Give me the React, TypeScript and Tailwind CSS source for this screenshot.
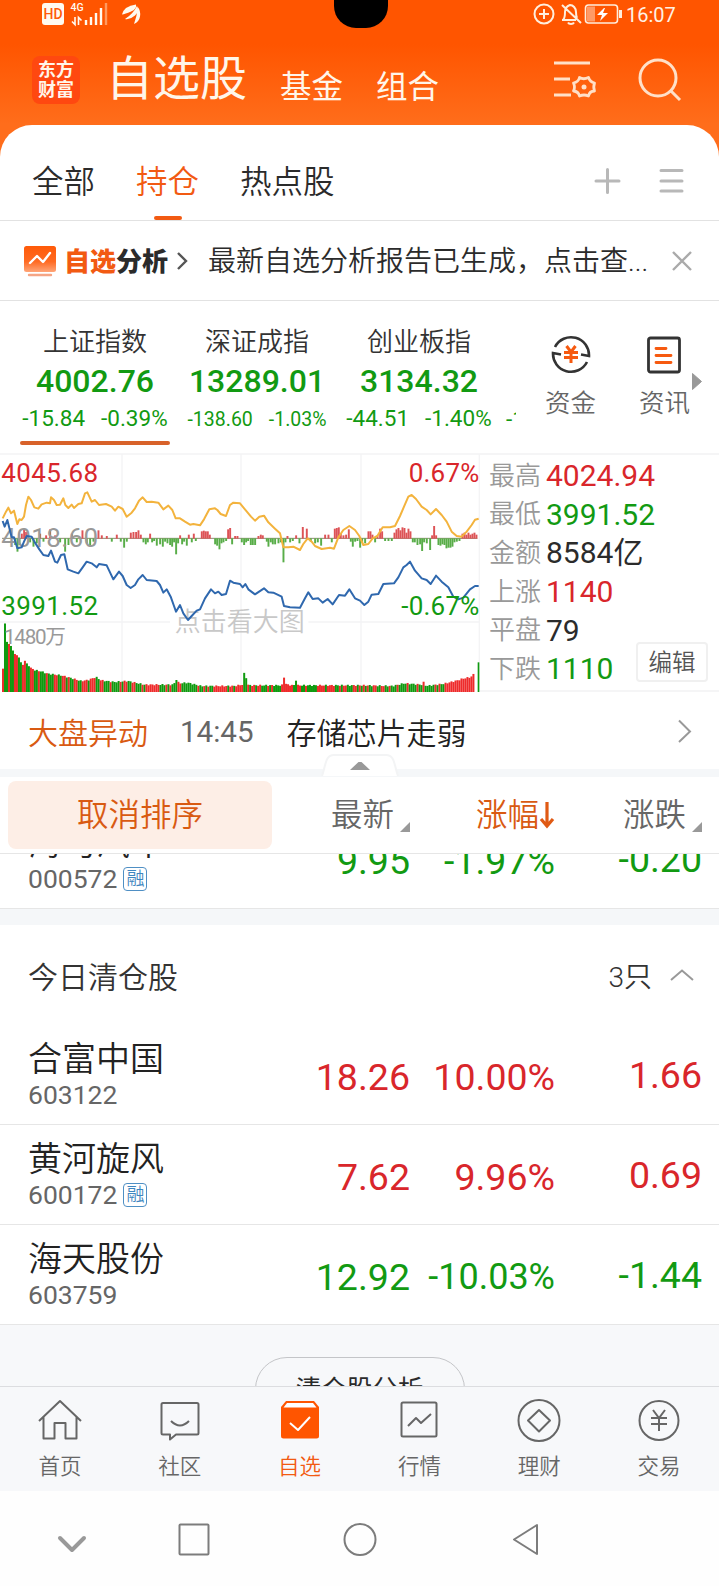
import type { ReactNode } from 'react';

const RED = '#d9262b';
const GREEN = '#129a12';

interface IndexQuote {
  name: string;
  value: string;
  change: string;
  percent: string;
  small?: boolean;
  active?: boolean;
}

interface Stock {
  name: string;
  code: string;
  margin?: boolean;
  price: string;
  percent: string;
  change: string;
  up: boolean;
}

const indices: IndexQuote[] = [
  { name: '上证指数', value: '4002.76', change: '-15.84', percent: '-0.39%', active: true },
  { name: '深证成指', value: '13289.01', change: '-138.60', percent: '-1.03%', small: true },
  { name: '创业板指', value: '3134.32', change: '-44.51', percent: '-1.40%' },
];

const stats = [
  { label: '最高', value: '4024.94', color: 'text-[#d9262b]' },
  { label: '最低', value: '3991.52', color: 'text-[#129a12]' },
  { label: '金额', value: '8584亿', color: 'text-[#2b2b2b]' },
  { label: '上涨', value: '1140', color: 'text-[#d9262b]' },
  { label: '平盘', value: '79', color: 'text-[#2b2b2b]' },
  { label: '下跌', value: '1110', color: 'text-[#129a12]' },
];

const cleared: Stock[] = [
  { name: '合富中国', code: '603122', price: '18.26', percent: '10.00%', change: '1.66', up: true },
  { name: '黄河旋风', code: '600172', margin: true, price: '7.62', percent: '9.96%', change: '0.69', up: true },
  { name: '海天股份', code: '603759', price: '12.92', percent: '-10.03%', change: '-1.44', up: false },
];

// Chart data, in the units of the chart's viewBox
const leadLine =
  '8,205 18,185 25,173 33,190 42,182 52,222 58,208 65,210 72,200 78,165 85,140 93,150 103,172 115,176 125,163 140,158 150,160 153,142 162,150 170,165 180,164 190,145 196,165 205,174 215,164 222,174 235,162 245,160 255,130 262,127 275,155 285,150 297,165 318,162 335,170 345,182 355,170 368,177 380,200 395,188 405,175 417,152 428,142 440,156 455,155 475,158 490,178 505,167 517,180 527,205 540,205 555,215 570,224 580,222 600,226 612,208 628,178 645,175 652,180 662,192 678,198 690,165 700,158 720,160 738,182 753,200 765,212 778,200 792,197 805,217 825,236 840,250 850,292 865,292 880,290 900,300 910,282 923,265 935,275 945,288 965,297 990,293 1002,296 1015,262 1030,240 1048,228 1065,240 1078,258 1090,285 1105,282 1118,265 1132,258 1148,232 1170,232 1185,228 1200,198 1212,170 1225,140 1235,135 1248,147 1265,170 1280,180 1292,193 1308,177 1325,195 1340,215 1355,245 1370,258 1385,260 1400,245 1415,225 1425,209 1436,206';

const priceLine =
  '8,213 14,230 22,210 35,262 42,262 52,295 65,292 72,275 80,258 95,260 105,278 118,298 130,315 145,318 153,302 165,335 172,338 183,315 193,313 203,358 220,365 235,370 248,352 260,335 275,340 290,352 297,342 320,346 340,388 357,365 368,378 380,405 392,414 405,405 415,388 428,375 440,390 470,393 480,405 490,428 500,418 512,440 522,468 528,485 540,465 550,490 564,510 575,498 590,482 600,478 615,445 633,418 645,430 655,425 665,435 678,432 690,392 700,398 720,402 728,412 736,402 745,418 765,433 792,415 805,427 820,428 845,440 852,468 870,472 900,473 915,445 925,427 938,447 955,445 968,458 983,447 998,463 1017,435 1035,437 1048,418 1065,445 1080,452 1093,465 1105,455 1115,434 1135,432 1150,402 1182,400 1195,382 1210,352 1220,345 1230,335 1245,362 1265,385 1280,390 1292,402 1308,377 1325,395 1345,412 1360,440 1375,448 1390,443 1410,418 1425,408 1436,408';

const momentum: [number, number][] = [
  [45, -20], [52, -40], [58, -20], [65, 15], [72, 30], [78, 20], [90, -12], [100, -25], [110, -15], [120, 15],
  [130, -10], [138, 10], [150, 28], [165, 10], [180, -12], [195, -40], [205, -20], [215, 15], [230, -12], [247, 25],
  [260, -15], [270, -20], [280, -10], [295, 25], [305, 10], [320, 8], [335, -10], [350, 12], [362, -10], [372, -28],
  [380, -10], [392, 18], [400, 20], [408, 20], [415, 25], [422, 12], [430, -12], [437, -18], [443, -12], [450, 15],
  [456, -12], [462, -8], [470, -22], [480, -18], [488, -25], [495, -10], [502, -15], [510, -20], [516, -25], [522, -12],
  [528, -48], [534, -15], [540, 10], [546, -18], [552, -10], [560, -22], [566, 12], [575, -12], [581, 15], [587, -8],
  [605, 22], [611, 24], [617, 22], [623, 22], [629, 12], [645, -18], [651, -22], [658, -33], [664, -15], [670, -12],
  [678, -8], [684, 28], [690, 32], [696, -18], [705, 8], [712, 8], [725, -12], [732, -20], [738, -12], [744, -8],
  [752, -20], [758, -20], [765, -20], [775, 8], [782, 12], [788, 10], [800, -10], [805, -25], [812, -12], [818, -18],
  [825, -18], [835, -15], [842, -12], [850, -72], [856, -12], [862, 8], [870, -12], [878, -8], [888, 10], [898, -15],
  [908, 35], [920, 30], [932, -10], [945, -15], [953, -12], [963, -22], [975, 12], [985, 12], [995, -12], [1004, 30],
  [1010, 32], [1016, 34], [1022, 15], [1030, 10], [1038, 12], [1046, 28], [1052, -10], [1058, -25], [1065, -10], [1072, -8],
  [1080, -28], [1086, -12], [1095, -15], [1105, 22], [1111, 22], [1117, 12], [1125, -12], [1132, 10], [1140, 30], [1146, 22],
  [1155, -8], [1165, -8], [1175, -8], [1183, 18], [1189, 28], [1195, 32], [1201, 25], [1207, 34], [1213, 32], [1219, 18],
  [1225, 30], [1231, 22], [1238, -12], [1244, -12], [1252, -20], [1260, -18], [1266, -38], [1272, -12], [1280, -15], [1290, -35],
  [1296, 10], [1302, 38], [1308, 10], [1315, -20], [1321, -22], [1327, -18], [1333, -20], [1339, -30], [1345, -28], [1351, -28],
  [1357, -25], [1363, -12], [1370, -10], [1378, -8], [1387, 15], [1393, 18], [1399, 12], [1405, 18], [1411, 12], [1417, 15],
  [1423, 18], [1429, 12],
];

const volumeShape: [number, number][] = [
  [6, 70], [12, 206], [18, 150], [30, 138], [40, 115], [52, 108], [62, 84], [68, 80], [73, 98], [80, 80], [100, 66],
  [120, 62], [140, 55], [180, 50], [210, 42], [240, 33], [262, 36], [285, 45], [300, 35], [340, 30], [380, 33],
  [430, 22], [518, 22], [526, 38], [534, 26], [560, 28], [600, 18], [700, 18], [724, 22], [730, 58], [736, 42],
  [742, 20], [843, 20], [849, 45], [856, 22], [879, 20], [885, 36], [891, 20], [960, 20], [1080, 20], [1175, 18],
  [1210, 26], [1262, 22], [1267, 30], [1275, 18], [1330, 25], [1370, 35], [1385, 40], [1410, 45], [1422, 58],
];

const volumeColors =
  'rggrggrrggrrggrrggrgggrgg' +
  'grrggrrgrggrrggrrrgrrrggrrgggrggggrgr' +
  'rggrrgggrgrrrrrrrgggrgrgggrrgggggggg' +
  'rggrgrggrrrrrrrgrrgrrrrggrgrrgrrg' +
  'ggrgrggggrrrrrrggrrggrgggggrrrrgrr' +
  'rrggrgrrgggrrgrgrgrggrrggrrggrgg' +
  'grggggrggggrggrgggggrgrggrrrrrrrrrrrrrrr';

function volumeAt(x: number) {
  const next = volumeShape.findIndex(([px]) => px >= x);
  if (next === -1) return 58;
  if (next === 0) return volumeShape[0][1];
  const [x0, y0] = volumeShape[next - 1];
  const [x1, y1] = volumeShape[next];
  return y0 + ((x - x0) / (x1 - x0)) * (y1 - y0);
}

function MarketChart() {
  const bars = Array.from({ length: 237 }, (_, i) => 6 + i * 5.98);

  return (
    <svg className="block h-[239px] w-[480px] shrink-0" viewBox="0 9 1440 717">
      <g stroke="#f4f4f5" strokeWidth="4">
        <path d="M0 12H1440M366 12V726M723 12V726M1083 12V726M1438 12V726" />
        <path d="M0 516H510M925 516H1440" strokeWidth="5" />
      </g>
      <path d="M6 265H1432" stroke="#8c8a70" strokeWidth="3" />
      {momentum.map(([x, h]) => (
        <rect key={x} x={x - 2.5} y={h > 0 ? 266 - h : 265} width="5.8" height={Math.abs(h)} fill={h > 0 ? '#dd5356' : '#58ad48'} />
      ))}
      {bars.map((x, i) => {
        const h = volumeAt(x) + (i > 14 ? Math.sin(i * 2.3) * 2 : 0);
        return <rect key={i} x={x} y={726 - h} width="6" height={h} fill={volumeColors[i % volumeColors.length] === 'r' ? '#ee2b2b' : '#0f9a0f'} />;
      })}
      <rect x="1433" y="637" width="5" height="89" fill="#0f9a0f" />
      <g fontSize="78">
        <text x="4" y="292" fill="#999" textLength="290">4018.60</text>
        <text x="12" y="583" fill="#999" fontSize="62" textLength="186">1480万</text>
        <text x="524" y="543" fill="#c8c8c8" fontWeight="350" textLength="390">点击看大图</text>
      </g>
      <polyline points={leadLine} fill="none" stroke="#f3b33d" strokeWidth="6" strokeLinejoin="round" />
      <polyline points={priceLine} fill="none" stroke="#2f68ae" strokeWidth="6" strokeLinejoin="round" />
      <g fontSize="78">
        <text x="4" y="96" fill={RED} textLength="290">4045.68</text>
        <text x="4" y="494" fill={GREEN} textLength="290">3991.52</text>
        <text x="1438" y="96" fill={RED} textAnchor="end" textLength="212">0.67%</text>
        <text x="1438" y="494" fill={GREEN} textAnchor="end" textLength="234">-0.67%</text>
      </g>
    </svg>
  );
}

function StatusBar() {
  return (
    <div className="flex h-7 items-center pl-[42px] pr-[43px] text-white">
      <svg className="h-7 w-[100px]" viewBox="0 0 100 28" fill="none">
        <rect x="0" y="3" width="22" height="22" rx="3" fill="#fffaf0" />
        <text x="11" y="19" fill="#ff5a0a" fontSize="14" fontWeight="500" textAnchor="middle">HD</text>
        <text x="28.5" y="11" fill="#fffaf0" fontSize="10.5" fontWeight="500">4G</text>
        <path d="M33 17v7.500l-3-3M36.500 25v-7.500l3 3" stroke="#fffaf0" strokeWidth="1.600" />
        <path d="M44 25v-5M49 25v-8M54 25v-12M59 25V8" stroke="#fffaf0" strokeWidth="2.400" />
        <path d="M64 25V3" stroke="#ff9a60" strokeWidth="2.400" />
        <path d="M80 14.500Q82 6 94 4.500Q95 9 89 11.500T80 14.500z" fill="#fffaf0" />
        <path d="M83 19Q91 14 95 6Q98 11 93 15.500T83 19z" fill="#fffaf0" />
        <path d="M92 24Q95 16 95.800 7Q99 11 98 16.500T92 24z" fill="#fffaf0" />
      </svg>
      <svg className="ml-auto h-7 w-[92px]" viewBox="0 0 92 28" fill="none" stroke="#ffeedd" strokeWidth="2">
        <circle cx="12" cy="14" r="9.500" />
        <path d="M7 14h10M12 9v10" />
        <path d="M31 20c2-2 2-4 2-8 0-4 2-6 5-7 3 0 6 3 6 7 0 3 0 4 1 6M30 20h14M36 22.500c1 2 5 2 6 0M30 5l19 18" strokeWidth="2" />
        <rect x="53.500" y="5" width="32" height="18" rx="3" strokeWidth="1.600" />
        <path d="M55 6.500h8v15h-8z" fill="#ff9a66" stroke="none" />
        <path d="M88.500 10v8" strokeWidth="3" />
        <path d="M72 8l-7 7h5l-2 6 8-8h-5l2-5z" fill="#fff" stroke="none" />
      </svg>
      <span className="ml-[2px] w-[50px] pt-0.5 text-[20px] leading-7 text-[#fff1e4]">16:07</span>
    </div>
  );
}

function Header() {
  return (
    <header className="relative h-[160px] shrink-0 bg-[linear-gradient(#ff5500_0px,#ff5500_44px,#ff6d1b_124px)]">
      <div className="absolute left-[334px] top-[-28px] h-14 w-[54px] rounded-[22px] bg-black" />
      <StatusBar />
      <div className="flex h-[96px] items-center pl-8 pr-[37px] text-[#fff6ea]">
        <div className="mt-2 flex h-12 w-12 flex-col items-center justify-center rounded-lg bg-[#ff4810] text-[18px] font-bold leading-[20px]">
          <span>东方</span>
          <span>财富</span>
        </div>
        <h1 className="ml-[26px] mt-1.5 text-[47px] leading-[60px]">自选股</h1>
        <span className="ml-[33px] mt-6 text-[31.500px] leading-10">基金</span>
        <span className="ml-[33px] mt-6 text-[31.500px] leading-10">组合</span>
        <svg className="ml-auto mt-[7px] h-11 w-[44px]" viewBox="0 0 44 44" fill="none" stroke="#ffe0c8" strokeWidth="3">
          <path d="M0 5h36M0 21h16M0 37h17" />
          <path d="M25.500 19.500q4 2.500 9 0 1.500 4.500 6 5.500-1.500 4.500 0 8-5 0-6 5-4.500-2-9 0-1-4.500-6-5 2-3.500 0-8 5-1 6-5.500z" strokeLinejoin="round" strokeWidth="2.800" />
          <circle cx="30" cy="29" r="2.500" fill="#ffe0c8" stroke="none" />
        </svg>
        <svg className="ml-[40px] mt-[7px] h-11 w-11" viewBox="0 0 44 44" fill="none" stroke="#ffe0c8" strokeWidth="3">
          <circle cx="20" cy="20" r="18" />
          <path d="M32 32l10 10" />
        </svg>
      </div>
    </header>
  );
}

function GroupTabs() {
  return (
    <div className="flex h-24 shrink-0 border-b border-[#e2e2e2] pl-8 pr-[35px] text-[31.500px] font-[350] leading-[115px] text-[#2b2b2b]">
      <span>全部</span>
      <span className="flex flex-col items-center pl-[41px] text-[#f25a12]">
        <span className="h-[91px]">持仓</span>
        <i className="h-1 w-7 rounded-full bg-[#f25a12]" />
      </span>
      <span className="pl-[41px]">热点股</span>
      <svg className="ml-auto mt-[42px] h-[28px] w-[92px]" viewBox="0 0 92 28" fill="none" stroke="#b8b8b8" strokeWidth="3" strokeLinecap="round">
        <path d="M4 14h23M15.500 2.500v23M69 3.500h21M69 14h21M69 24h21" />
      </svg>
    </div>
  );
}

function AnalysisBanner() {
  return (
    <div className="flex h-20 shrink-0 items-center border-b border-[#e2e2e2] pl-6 pr-[27px]">
      <svg className="h-8 w-8" viewBox="0 0 32 32" fill="none">
        <defs>
          <linearGradient id="badge" x1="0" y1="0" x2="0" y2="1">
            <stop offset="0" stopColor="#ff5a08" />
            <stop offset=".6" stopColor="#ff6a22" />
            <stop offset="1" stopColor="#ffa578" />
          </linearGradient>
        </defs>
        <rect y="1" width="32" height="26" rx="2.500" fill="url(#badge)" />
        <path d="M6 18l7-7 6 6 7-9" stroke="#fff" strokeWidth="2.400" strokeLinecap="round" strokeLinejoin="round" />
        <path d="M5 30h22" stroke="#f5a585" strokeWidth="2.400" strokeLinecap="round" />
      </svg>
      <span className="ml-[8px] pt-0.5 text-[26px] font-black leading-9 text-[#2b2b2b]">
        <b className="font-black text-[#f25a12]">自选</b>分析
      </span>
      <svg className="ml-[6px] h-5 w-4" viewBox="0 0 16 20" fill="none" stroke="#555" strokeWidth="2.400">
        <path d="M4 2l8 8-8 8" />
      </svg>
      <span className="ml-[18px] whitespace-nowrap pt-0.5 text-[28px] font-[350] leading-9 text-[#2b2b2b]">最新自选分析报告已生成，点击查...</span>
      <svg className="ml-auto h-5 w-5" viewBox="0 0 20 20" fill="none" stroke="#aaa" strokeWidth="2.400">
        <path d="M1 1l18 18M19 1L1 19" />
      </svg>
    </div>
  );
}

function IndexStrip() {
  return (
    <div className="flex h-[152px] shrink-0">
      <div className="flex w-[516px] shrink-0 gap-3 overflow-hidden pl-5">
        {indices.map((item) => (
          <div key={item.name} className="flex w-[150px] shrink-0 flex-col items-center pt-[24px]">
            <span className="text-[26px] font-[350] leading-[34px] text-[#333]">{item.name}</span>
            <span className="pt-[4px] text-[32px] font-medium leading-[36px] text-[#129a12]">{item.value}</span>
            <div className={`mt-0.5 flex h-[36px] w-full items-center justify-center whitespace-nowrap text-[#129a12] ${item.small ? 'gap-[16px] pt-0.5 text-[19.500px]' : 'gap-[16px] text-[22.500px]'}`}>
              <span>{item.change}</span>
              <span>{item.percent}</span>
            </div>
            {item.active && <i className="mt-[4px] h-1 w-full rounded-full bg-[#d8622a]" />}
          </div>
        ))}
        <div className="flex shrink-0 pt-[100px] text-[22.500px] leading-9 text-[#129a12]">-17.03</div>
      </div>
      <div className="flex grow justify-between pl-[29px] pr-[16px] text-[25.500px] font-[350] text-[#666]">
        <div className="flex flex-col items-center pt-[33px]">
          <svg className="h-10 w-10" viewBox="0 0 40 40" fill="none" stroke="#333" strokeWidth="2.600">
            <path d="M4 13a18 18 0 0 1 34 9l-8-1.500M36 28a18 18 0 0 1-34-9l8 1.500" />
            <path d="M15.500 12l4.500 6 4.500-6M13 18.500h14M13 23.500h14M20 18v11" stroke="#f65a10" strokeWidth="3" />
          </svg>
          <span className="pt-[11px] leading-9">资金</span>
        </div>
        <div className="flex items-center">
          <div className="flex h-full flex-col items-center pt-[33px]">
            <svg className="h-10 w-10" viewBox="0 0 40 40" fill="none" stroke="#333" strokeWidth="2.800">
              <rect x="4.500" y="4" width="31" height="34" rx="2" />
              <path d="M12 14.500h10M12 21.500h15M12 28.500h15" stroke="#f65a10" strokeLinecap="round" />
            </svg>
            <span className="pt-[11px] leading-9">资讯</span>
          </div>
          <svg className="ml-px mt-2 h-5 w-[12px]" viewBox="0 0 11 20" fill="#999" stroke="#999" strokeLinejoin="round">
            <path d="M1 2.500l9 8L1 18.500z" />
          </svg>
        </div>
      </div>
    </div>
  );
}

function MarketPanel() {
  return (
    <div className="flex h-[239px] shrink-0">
      <MarketChart />
      <div className="flex grow items-end border-y-2 border-[#f5f5f6] pl-[9px]">
        <div className="flex h-full w-[167px] shrink-0 flex-col pt-[2px]">
          {stats.map((row) => (
            <div key={row.label} className="flex h-[38.600px] shrink-0 items-center whitespace-nowrap">
              <span className="w-[57px] text-[26px] font-[350] text-[#999]">{row.label}</span>
              <span className={`text-[30px] leading-9 ${row.color}`}>{row.value}</span>
            </div>
          ))}
        </div>
        <button className="-ml-5 mb-[8px] h-10 w-[72px] shrink-0 rounded border-2 border-[#f0f0f0] bg-white pt-0.5 text-[23.500px] font-[350] leading-8 text-[#555]">编辑</button>
      </div>
    </div>
  );
}

function MoverRow() {
  return (
    <div className="relative flex h-[77px] shrink-0 items-center pl-7 pr-[26px] pt-[5px] text-[30px] font-[350]">
      <span className="text-[#d95a12]">大盘异动</span>
      <span className="ml-[32px] pb-0.5 text-[29.500px] font-normal text-[#666]">14:45</span>
      <span className="ml-[33px] text-[#222]">存储芯片走弱</span>
      <svg className="mb-1 ml-auto h-6 w-4" viewBox="0 0 16 24" fill="none" stroke="#999" strokeWidth="2">
        <path d="M2 1.500L13 12.500 2 23" />
      </svg>
      {/* collapse handle sits across the divider */}
      <svg className="absolute left-[321px] top-[61px] h-6 w-[78px]" viewBox="0 0 78 24" fill="#fff">
        <path d="M1 23C5 12 4 2 13 2h52c9 0 8 10 12 21" stroke="#f3f4f5" strokeWidth="2" />
        <path d="M29 17l8.500-8h3l8.500 8z" fill="#999" />
      </svg>
    </div>
  );
}

const SortCorner = () => (
  <svg className="ml-[6px] mt-[22px] h-[10px] w-[10px]" viewBox="0 0 10 10" fill="#999">
    <path d="M10 0v10H0z" />
  </svg>
);

function SortHeader() {
  return (
    <div className="flex h-[77px] shrink-0 border-b border-[#e6e6e6] pl-2 pr-[17px] pt-1 text-[31.500px] font-[350] text-[#666]">
      <div className="flex h-[68px] w-[264px] items-center justify-center rounded-lg bg-[#fdeee6] pt-0.5 text-[#d95a12]">取消排序</div>
      <div className="flex h-[68px] w-[138px] items-center justify-end pt-0.5">
        最新
        <SortCorner />
      </div>
      <div className="flex h-[68px] w-[145px] items-center justify-end pt-0.5 text-[#d95a12]">
        涨幅
        <svg className="mb-0.5 h-7 w-4" viewBox="0 0 16 28" fill="none" stroke="#e05a14" strokeWidth="3.200">
          <path d="M8 1v24M2 18l6 7 6-7" />
        </svg>
      </div>
      <div className="flex h-[68px] w-[147px] items-center justify-end pt-0.5">
        涨跌
        <SortCorner />
      </div>
    </div>
  );
}

function StockRow({ stock }: { stock: Stock }) {
  const color = stock.up ? 'text-[#d9262b]' : 'text-[#129a12]';

  return (
    <div className={`grid h-[100px] shrink-0 grid-cols-[272px_138px_145px_147px] border-b border-[#e6e6e6] text-right text-[37.500px] leading-[44px] ${color}`}>
      <div className="flex flex-col items-start pl-[28px] pt-[12px]">
        <span className="text-[34px] font-[350] leading-[44px] text-[#222]">{stock.name}</span>
        <span className="flex items-center text-[26.500px] leading-[28px] text-[#666]">
          {stock.code}
          {stock.margin && (
            <i className="ml-[6px] flex h-6 w-6 items-center justify-center rounded-[4px] border border-[#4f8fc4] text-[18px] font-[350] not-italic leading-6 text-[#3f86c0]">融</i>
          )}
        </span>
      </div>
      <span className="pt-[30px]">{stock.price}</span>
      <span className={stock.percent.length > 6 ? 'pt-[30px] text-[36px]' : 'pt-[30px]'}>{stock.percent}</span>
      <span className="pt-[28px]">{stock.change}</span>
    </div>
  );
}

function ClearedSection() {
  return (
    <section className="shrink-0">
      <div className="flex h-[100px] items-center pl-[28px] pr-[25px] pt-[5px] text-[30px] font-[350] text-[#333]">
        <span>今日清仓股</span>
        <span className="ml-auto text-[28px]">3只</span>
        <svg className="mb-1.5 ml-[18px] h-3 w-6" viewBox="0 0 24 12" fill="none" stroke="#999" strokeWidth="2">
          <path d="M1 11L12 1.500 23 11" />
        </svg>
      </div>
      {cleared.map((stock) => (
        <StockRow key={stock.code} stock={stock} />
      ))}
    </section>
  );
}

function TabItem({ label, active, children }: { label: string; active?: boolean; children: ReactNode }) {
  return (
    <div className={`flex flex-1 flex-col items-center pt-[12px] text-[21.500px] font-[350] leading-8 ${active ? 'text-[#f25a12]' : 'text-[#666]'}`}>
      <svg className="h-11 w-11" viewBox="0 0 44 44" fill="none" stroke="currentColor" strokeWidth="2" strokeLinejoin="round">
        {children}
      </svg>
      <span className="pt-[8px]">{label}</span>
    </div>
  );
}

function BottomTabs() {
  return (
    <nav className="flex h-[105px] shrink-0 border-t border-[#dcdde0] bg-[#f7f8fa]">
      <TabItem label="首页">
        <path d="M1 22L22 2l21 20M5.500 18v21.500H16.500V24h11v15.500H38.500V18" />
      </TabItem>
      <TabItem label="社区">
        <path d="M5 4h34a1.500 1.500 0 0 1 1.500 1.500V34a1.500 1.500 0 0 1-1.500 1.500H18L12 40.500V35.500H5A1.500 1.500 0 0 1 3.500 34V5.500A1.500 1.500 0 0 1 5 4z" />
        <path d="M13 22q9 9 18 0" />
      </TabItem>
      <TabItem label="自选" active>
        <path d="M8 2h28l5 6v29a2.500 2.500 0 0 1-2.500 2.500h-33A2.500 2.500 0 0 1 3 37V8z" fill="#ff5500" stroke="none" />
        <path d="M9 4h26l3.500 4.500h-33z" fill="#fff" stroke="none" />
        <path d="M12 24l8 7 12-13" stroke="#fff" />
      </TabItem>
      <TabItem label="行情">
        <rect x="4.500" y="3.500" width="35" height="34" rx="1.500" />
        <path d="M11 27l8-8 5 5 10-9" />
      </TabItem>
      <TabItem label="理财">
        <circle cx="22" cy="21.500" r="20.500" />
        <path d="M22 11l11 10.500L22 32.500 11 21.500z" />
      </TabItem>
      <TabItem label="交易">
        <circle cx="22" cy="21.500" r="19.500" />
        <path d="M16 11l6 8 6-8M14 19h16M14 25h16M22 19v13" strokeLinejoin="miter" />
      </TabItem>
    </nav>
  );
}

function SystemNav() {
  return (
    <div className="flex h-[95px] shrink-0 items-center bg-[#fefefe]">
      <svg className="h-10 w-[719px]" viewBox="0 0 719 40" fill="none" stroke="#7c7c7c" strokeWidth="2" strokeLinejoin="round">
        <path d="M60 19l12 12 12-12" stroke="#999" strokeWidth="4" strokeLinecap="round" />
        <rect x="179.500" y="5.500" width="29" height="30" rx="1" />
        <circle cx="360" cy="20.500" r="15.500" />
        <path d="M537 6v29L514 20.500z" />
      </svg>
    </div>
  );
}

export default function App() {
  return (
    <div className="flex h-[1586px] w-[719px] flex-col overflow-hidden bg-white font-['Roboto','Noto_Sans_CJK_SC',sans-serif]">
      <Header />
      <main className="relative -mt-[35px] flex h-[1261px] shrink-0 flex-col overflow-hidden rounded-t-[32px] bg-white">
        <GroupTabs />
        <AnalysisBanner />
        <IndexStrip />
        <MarketPanel />
        <MoverRow />
        <div className="h-2 shrink-0 bg-[#f5f7f9]" />
        <SortHeader />
        <div className="flex h-[55px] shrink-0 flex-col justify-end overflow-hidden">
          <StockRow stock={{ name: '海马汽车', code: '000572', margin: true, price: '9.95', percent: '-1.97%', change: '-0.20', up: false }} />
        </div>
        <div className="h-4 shrink-0 bg-[#f5f7f9]" />
        <ClearedSection />
        <div className="flex grow justify-center bg-[#f7f8fa] pt-8">
          <button className="h-[64px] w-[210px] shrink-0 rounded-full border border-[#c4c5c8] text-[25.500px] leading-[62px] text-[#2b2b2b]">清仓股分析</button>
        </div>
      </main>
      <BottomTabs />
      <SystemNav />
    </div>
  );
}
